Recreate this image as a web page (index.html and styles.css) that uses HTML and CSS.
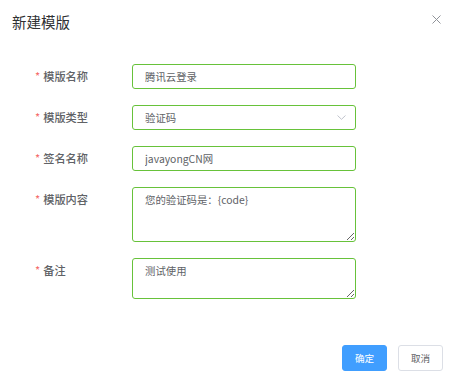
FILE: index.html
```html
<!DOCTYPE html>
<html lang="zh-CN">
<head>
    <meta charset="UTF-8">
    <meta name="viewport" content="width=device-width, initial-scale=1.0">
    <title>新建模版</title>
    <link rel="stylesheet" href="styles.css">
</head>
<body>
    <div class="dialog">
        <div class="dialog-header">
            <span class="dialog-title">新建模版</span>
            <button class="dialog-close" aria-label="关闭">
                <svg width="9" height="9" viewBox="0 0 9 9">
                    <path d="M0.5 0.5 L8.5 8.5 M8.5 0.5 L0.5 8.5" stroke="#909399" stroke-width="1" fill="none"/>
                </svg>
            </button>
        </div>

        <form class="dialog-body">
            <div class="form-item">
                <label class="form-label"><span class="required">*</span>模版名称</label>
                <div class="form-content">
                    <input class="form-input" type="text" value="腾讯云登录">
                </div>
            </div>

            <div class="form-item">
                <label class="form-label"><span class="required">*</span>模版类型</label>
                <div class="form-content select">
                    <input class="form-input" type="text" value="验证码" readonly>
                    <svg class="select-arrow" width="9" height="5" viewBox="0 0 9 5">
                        <path d="M0.5 0.5 L4.5 4.3 L8.5 0.5" stroke="#c0c4cc" stroke-width="1" fill="none"/>
                    </svg>
                </div>
            </div>

            <div class="form-item">
                <label class="form-label"><span class="required">*</span>签名名称</label>
                <div class="form-content">
                    <input class="form-input" type="text" value="javayongCN网">
                </div>
            </div>

            <div class="form-item">
                <label class="form-label"><span class="required">*</span>模版内容</label>
                <div class="form-content">
                    <textarea class="form-textarea content">您的验证码是：{code}</textarea>
                </div>
            </div>

            <div class="form-item">
                <label class="form-label"><span class="required">*</span>备注</label>
                <div class="form-content">
                    <textarea class="form-textarea remark">测试使用</textarea>
                </div>
            </div>
        </form>

        <div class="dialog-footer">
            <button class="btn btn-primary">确定</button>
            <button class="btn">取消</button>
        </div>
    </div>
</body>
</html>
```

FILE: styles.css
```css
* {
    margin: 0;
    padding: 0;
    box-sizing: border-box;
}

body {
    background: #fff;
    font-family: 'Noto Sans CJK SC', 'Noto Sans', sans-serif;
    color: #606266;
}

.dialog {
    width: 452px;
    height: 382px;
    background: #fff;
}

.dialog-header {
    display: flex;
    justify-content: space-between;
    align-items: flex-start;
    padding: 12px 11px 0 12px;
    height: 64px;
}

.dialog-title {
    font-size: 14.5px;
    line-height: 20px;
    font-weight: 400;
    color: #303133;
}

.dialog-close {
    border: none;
    background: none;
    width: 9px;
    height: 9px;
    margin-top: 3px;
    display: block;
}

.dialog-close svg {
    display: block;
}

.dialog-body {
    padding-left: 35px;
}

.form-item {
    display: flex;
    margin-bottom: 16px;
}

.form-label {
    width: 97px;
    font-size: 11.2px;
    line-height: 25px;
    font-weight: 500;
    color: #606266;
}

.required {
    color: #f56c6c;
    margin-right: 3px;
    font-weight: 400;
}

.form-content {
    position: relative;
    width: 224px;
}

.form-input,
.form-textarea {
    display: block;
    width: 100%;
    border: 1px solid #67c23a;
    border-radius: 3px;
    font-family: inherit;
    font-size: 10.4px;
    color: #606266;
    outline: none;
    background: #fff;
}

.form-input {
    height: 25px;
    padding: 0 12px;
}

.form-textarea {
    padding: 4px 12px;
    line-height: 1.5;
    resize: vertical;
}

.form-textarea.content {
    height: 55px;
}

.form-textarea.remark {
    height: 41px;
}

.select-arrow {
    position: absolute;
    right: 10px;
    top: 10px;
}

.dialog-footer {
    display: flex;
    justify-content: flex-end;
    gap: 11px;
    padding: 30px 9px 0 0;
}

.btn {
    width: 45px;
    height: 26px;
    border: 1px solid #dcdfe6;
    border-radius: 3px;
    background: #fff;
    color: #606266;
    font-family: inherit;
    font-size: 9.6px;
    cursor: pointer;
}

.btn-primary {
    background: #409eff;
    border-color: #409eff;
    color: #fff;
}
```
